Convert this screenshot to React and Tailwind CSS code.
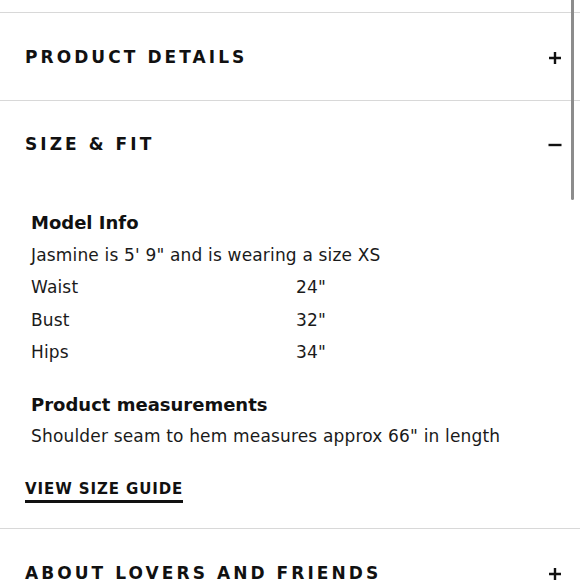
import React from 'react'

const font = { fontFamily: '"DejaVu Sans", "Open Sans", sans-serif' }

function Plus() {
  return (
    <svg width="14" height="14" viewBox="0 0 14 14">
      <path d="M7 1v12M1 7h12" stroke="#111" strokeWidth="2.4" />
    </svg>
  )
}

function Minus() {
  return (
    <svg width="14" height="14" viewBox="0 0 14 14">
      <path d="M0.5 7h13" stroke="#111" strokeWidth="2.4" />
    </svg>
  )
}

function Header({ title, open, className }) {
  return (
    <div className={`flex items-center justify-between pl-[25px] pr-[18px] ${className}`}>
      <span className="text-[17px] font-bold tracking-[0.18em] text-[#111]">{title}</span>
      {open ? <Minus /> : <Plus />}
    </div>
  )
}

const rows = [
  ['Waist', '24"'],
  ['Bust', '32"'],
  ['Hips', '34"'],
]

export default function App() {
  return (
    <div className="relative h-[580px] w-[580px] overflow-hidden bg-white text-[#1a1a1a]" style={font}>
      {/* scrollbar thumb */}
      <div className="absolute right-[6px] top-0 h-[200px] w-[3px] rounded-b bg-[#8c8c8c]" />

      <div className="h-[12px]" />
      <div className="border-t border-[#d8d8d8]">
        <Header title="PRODUCT DETAILS" className="h-[87px] pt-[3px]" />
      </div>

      <div className="border-t border-[#d8d8d8]">
        <Header title="SIZE & FIT" open className="h-[84px] pt-[3px]" />

        <div className="pl-[31px] pt-[22px] text-[17px] tracking-[0.01em]">
          <div className="text-[18px] font-bold leading-[32px] tracking-normal text-[#111]">Model Info</div>
          <div className="leading-[32px]">Jasmine is 5' 9" and is wearing a size XS</div>
          {rows.map(([k, v]) => (
            <div key={k} className="grid grid-cols-[265px_1fr] leading-[32.5px]">
              <span>{k}</span>
              <span>{v}</span>
            </div>
          ))}
          <div className="mt-[20px] text-[18px] font-bold leading-[32px] tracking-normal text-[#111]">
            Product measurements
          </div>
          <div className="leading-[30px]">Shoulder seam to hem measures approx 66" in length</div>
        </div>

        <div className="pl-[25px] pt-[26px] pb-[25px]">
          <span className="inline-block border-b-[3px] border-[#111] text-[15px] font-bold leading-[21px] tracking-[0.06em] text-[#111]">
            VIEW SIZE GUIDE
          </span>
        </div>
      </div>

      <div className="border-t border-[#d8d8d8]">
        <Header title="ABOUT LOVERS AND FRIENDS" className="h-[86px] pt-[5px]" />
      </div>
    </div>
  )
}
